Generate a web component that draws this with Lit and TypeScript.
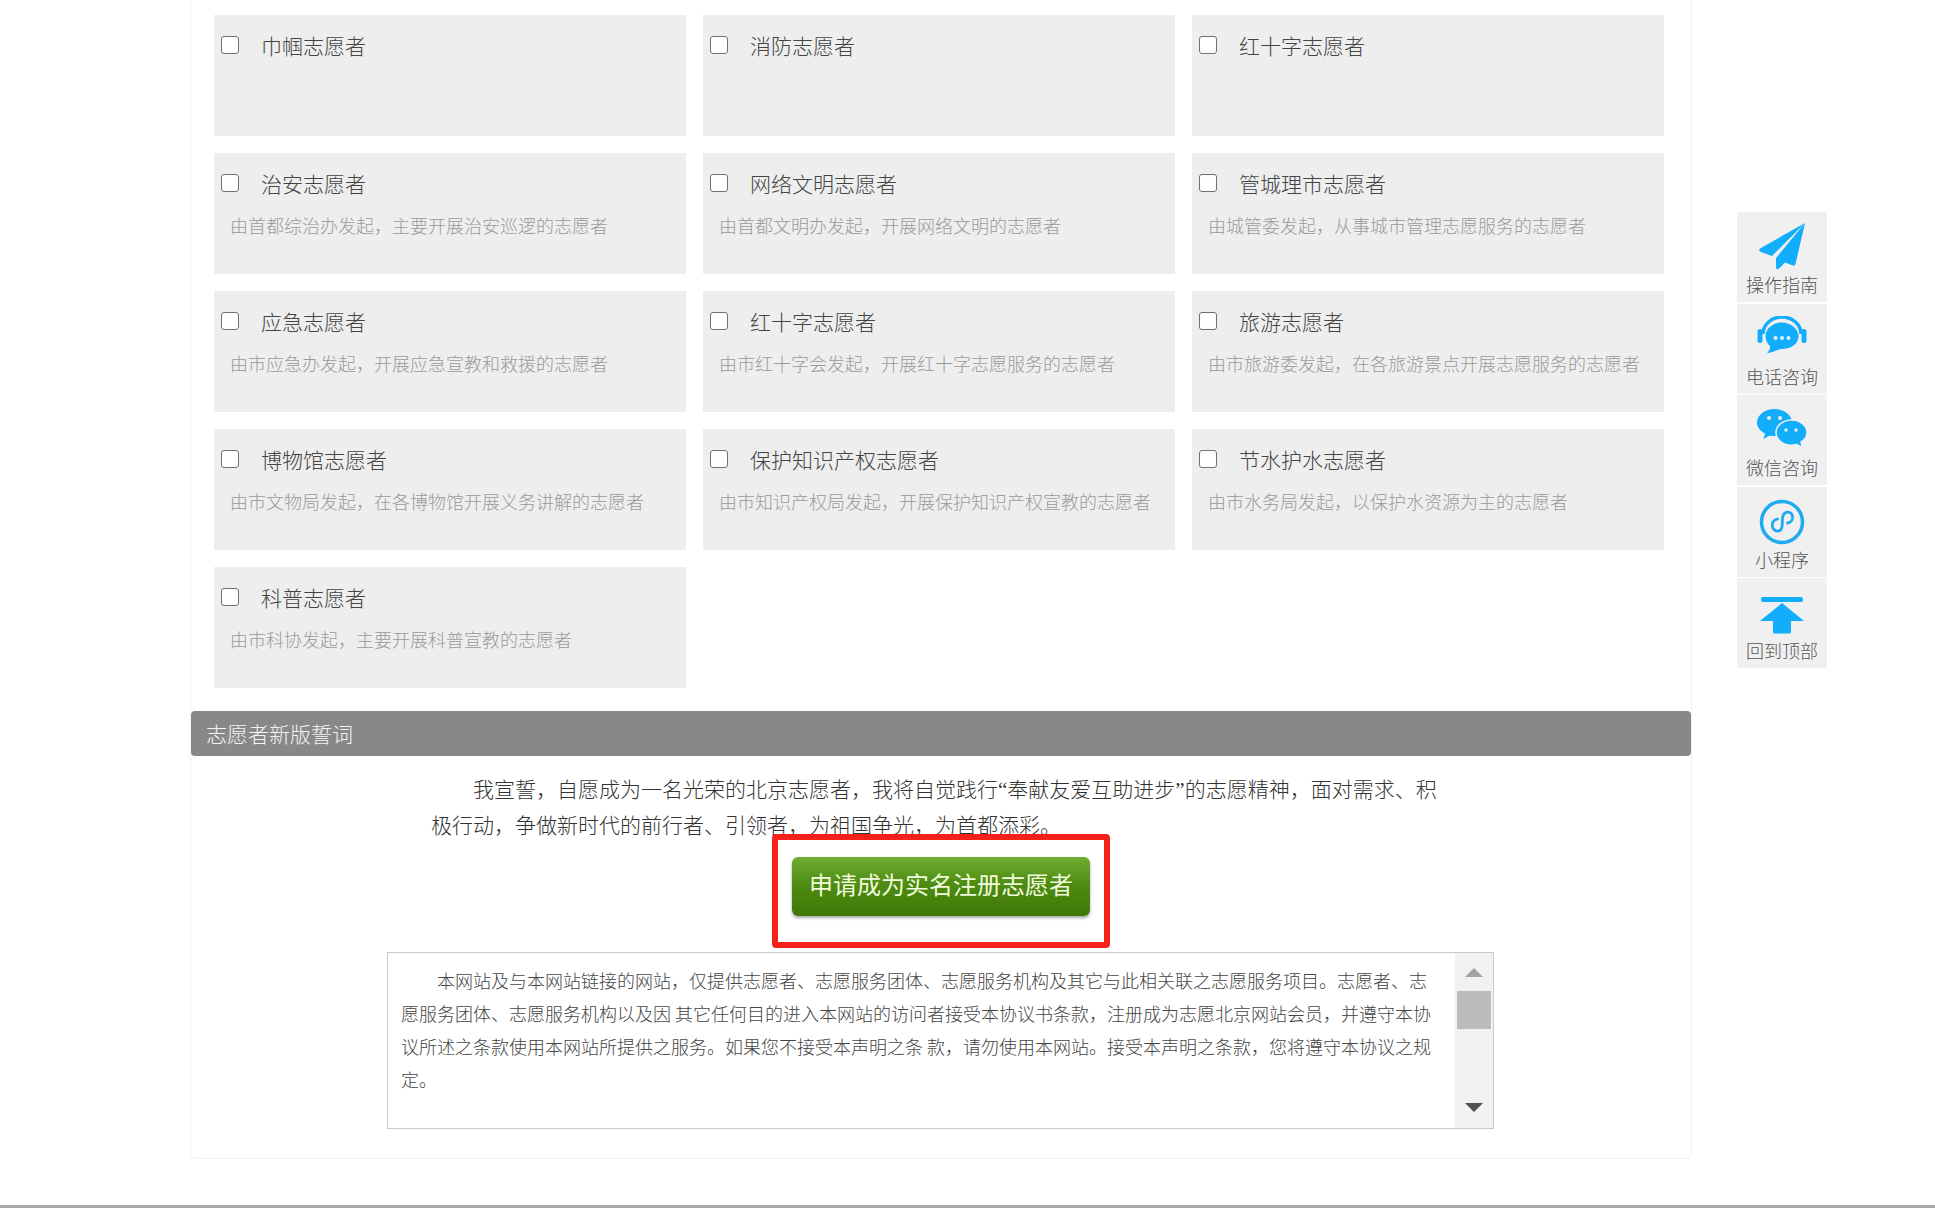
import { LitElement, html, css, svg } from "lit";
import { customElement } from "lit/decorators.js";

const cards: [string, string][] = [
  ["巾帼志愿者", ""],
  ["消防志愿者", ""],
  ["红十字志愿者", ""],
  ["治安志愿者", "由首都综治办发起，主要开展治安巡逻的志愿者"],
  ["网络文明志愿者", "由首都文明办发起，开展网络文明的志愿者"],
  ["管城理市志愿者", "由城管委发起，从事城市管理志愿服务的志愿者"],
  ["应急志愿者", "由市应急办发起，开展应急宣教和救援的志愿者"],
  ["红十字志愿者", "由市红十字会发起，开展红十字志愿服务的志愿者"],
  ["旅游志愿者", "由市旅游委发起，在各旅游景点开展志愿服务的志愿者"],
  ["博物馆志愿者", "由市文物局发起，在各博物馆开展义务讲解的志愿者"],
  ["保护知识产权志愿者", "由市知识产权局发起，开展保护知识产权宣教的志愿者"],
  ["节水护水志愿者", "由市水务局发起，以保护水资源为主的志愿者"],
  ["科普志愿者", "由市科协发起，主要开展科普宣教的志愿者"],
];

const BLUE = "#12adfb";
const icons = [
  {
    label: "操作指南", top: 11, icon: svg`<svg width="46" height="47" viewBox="0 0 46 47" fill="${BLUE}">
      <path d="M46 0 L1 25.5 Q-1 27.5 2 29 L13 33 Z"/>
      <path d="M46 0 L17 35 V44 Q17 47.5 20 45.5 L26 39.5 L34 42.5 Q36 43 36.5 41 Z"/></svg>`,
  },
  {
    label: "电话咨询", top: 12, icon: svg`<svg width="50" height="38" viewBox="0 0 50 38">
      <path d="M6 18 A19 17 0 0 1 44 18" fill="none" stroke="${BLUE}" stroke-width="3.5"/>
      <rect x="0.5" y="13" width="5" height="14" rx="2.5" fill="${BLUE}"/>
      <rect x="44.5" y="13" width="5" height="14" rx="2.5" fill="${BLUE}"/>
      <path d="M25 6.5 C34 6.5 41.5 13 41.5 20 C41.5 28 34 33 25 33 C21 33 18 36 10 37 C12 35 13.5 32.5 13 30 C10 27.5 8.5 24 8.5 20 C8.5 13 16 6.5 25 6.5 Z" fill="${BLUE}"/>
      <circle cx="18.5" cy="22" r="2" fill="#fff" opacity=".85"/><circle cx="25" cy="22" r="2" fill="#fff" opacity=".85"/><circle cx="31.5" cy="22" r="2" fill="#fff" opacity=".85"/></svg>`,
  },
  {
    label: "微信咨询", top: 13, icon: svg`<svg width="50" height="41" viewBox="0 0 50 41">
      <path d="M17.5 1 C27 1 35 7 35 14.5 C35 22 27 28 17.5 28 C15.5 28 14 27.8 12.5 27.4 L6.5 31 L8 25.5 C3 23 0 19 0 14.5 C0 7 8 1 17.5 1 Z" fill="${BLUE}"/>
      <path d="M34.5 12 C43 12 50 17.5 50 24.5 C50 28.5 47.5 32 44 34 L45.5 39.5 L39.5 36.5 C37.8 37 36.2 37.2 34.5 37.2 C26 37.2 19 31.5 19 24.5 C19 17.5 26 12 34.5 12 Z" fill="${BLUE}" stroke="#f0f0f0" stroke-width="1.5"/>
      <circle cx="12" cy="10" r="2" fill="#f0f0f0"/><circle cx="23" cy="10" r="2" fill="#f0f0f0"/>
      <circle cx="29" cy="22" r="1.7" fill="#f0f0f0"/><circle cx="39" cy="22" r="1.7" fill="#f0f0f0"/></svg>`,
  },
  {
    label: "小程序", top: 12, icon: svg`<svg width="46" height="46" viewBox="0 0 46 46" fill="none" stroke="#20aaf0">
      <circle cx="23" cy="23" r="20.5" stroke-width="3.5"/>
      <path d="M18.5 20 C14.5 21 12.5 24 13.5 28 C14.5 32 19.5 33.5 22 30.5 C23.5 28.5 23.3 25.5 23.3 22 C23.3 18 23.8 15.5 26 14 C29 12 33 13.5 33.5 17.5 C34 21 31.5 23.5 28.5 24" stroke-width="2.8" stroke-linecap="round"/></svg>`,
  },
  {
    label: "回到顶部", top: 19, icon: svg`<svg width="44" height="37" viewBox="0 0 44 37" fill="${BLUE}">
      <rect x="1" y="0" width="42" height="5" rx="2"/>
      <path d="M22 6 L44 24 H31 V35 Q31 36.5 29.5 36.5 H14.5 Q13 36.5 13 35 V24 H0 Z"/></svg>`,
  },
];

@customElement("app-root")
export class AppRoot extends LitElement {
  static styles = css`
    :host {
      display: block;
      position: relative;
      height: 1208px;
      overflow: hidden;
      background: #fff;
      font-family: "Noto Sans CJK SC", "Liberation Serif", sans-serif;
      font-weight: 300;
    }
    .page {
      height: 1208px;
      display: flex;
      flex-direction: column;
    }
    .panel {
      width: 1502px;
      height: 1159px;
      margin-left: 190px;
      box-sizing: border-box;
      border: 1px solid #f1f1f1;
      border-top: 0;
      border-radius: 0 0 6px 6px;
      position: relative;
    }
    .grid {
      display: grid;
      grid-template-columns: repeat(3, 472px);
      grid-auto-rows: 121px;
      gap: 17px;
      padding: 15px 0 0 23px;
    }
    .card {
      background: #eeeeee;
      padding-top: 20px;
      box-sizing: border-box;
    }
    .row {
      display: flex;
      align-items: center;
      height: 22px;
      padding-left: 7px;
    }
    .row input {
      appearance: none;
      width: 18px;
      height: 18px;
      margin: -2px 22px 0 0;
      flex: none;
      box-sizing: border-box;
      background: #fff;
      border: 1px solid #707070;
      border-radius: 3px;
    }
    .title {
      font-size: 21px;
      line-height: 22px;
      margin-top: -2px;
      color: #444;
    }
    .desc {
      margin-top: 18px;
      padding-left: 16px;
      font-size: 18px;
      line-height: 24px;
      color: #9a9a9a;
      white-space: nowrap;
    }
    .header {
      margin-top: 23px;
      height: 45px;
      box-sizing: border-box;
      padding: 0 0 2px 15px;
      background: #888;
      border-radius: 4px;
      display: flex;
      align-items: center;
      font-size: 21px;
      color: #f4f4f4;
    }
    .oath {
      width: 1004px;
      margin: 14px 0 0 240px;
      font-size: 21px;
      line-height: 36px;
      color: #333;
      white-space: nowrap;
    }
    .oath div:first-child {
      padding-left: 42px;
    }
    .q {
      font-family: "Liberation Serif", serif;
      font-weight: 400;
      line-height: 0;
    }
    .btn-wrap {
      display: flex;
      justify-content: center;
      margin-top: 15px;
      position: relative;
    }
    .btn {
      width: 298px;
      height: 59px;
      box-sizing: border-box;
      border: 0;
      border-radius: 6px;
      background: linear-gradient(#6fad33, #4f8c12 45%, #3d7805);
      box-shadow: 0 2px 3px rgba(0, 0, 0, 0.35);
      color: #f0fbdc;
      font: inherit;
      font-weight: 400;
      font-size: 24px;
      padding: 0 0 6px;
    }
    .mark {
      position: absolute;
      left: 581px;
      top: -23px;
      width: 338px;
      height: 114px;
      box-sizing: border-box;
      border: 6px solid #f5211a;
      border-radius: 4px;
    }
    .agree {
      display: flex;
      width: 1107px;
      height: 177px;
      box-sizing: border-box;
      margin: 36px 0 0 196px;
      border: 1px solid #c9c9c9;
    }
    .agree-text {
      flex: 1;
      box-sizing: border-box;
      padding: 11px 0 0 13px;
      font-size: 18px;
      line-height: 33px;
      color: #444;
      text-indent: 36px;
      min-width: 0;
    }
    .agree-text p {
      margin: 0;
      width: 1036px;
    }
    .scroll {
      width: 38px;
      flex: none;
      background: #f1f1f1;
      display: flex;
      flex-direction: column;
      align-items: center;
      box-sizing: border-box;
      padding-top: 15px;
    }
    .up {
      width: 0;
      height: 0;
      border-left: 9px solid transparent;
      border-right: 9px solid transparent;
      border-bottom: 9px solid #a3a3a3;
    }
    .thumb {
      width: 34px;
      height: 38px;
      margin-top: 14px;
      background: #bcbcbc;
    }
    .down {
      width: 0;
      height: 0;
      margin-top: 74px;
      border-left: 9px solid transparent;
      border-right: 9px solid transparent;
      border-top: 9px solid #505050;
    }
    .band {
      margin-top: auto;
      height: 3px;
      background: #a9a9a9;
    }
    .side {
      position: absolute;
      left: 1737px;
      top: 212px;
      width: 90px;
      display: flex;
      flex-direction: column;
      gap: 1.5px;
    }
    .side-item {
      height: 90px;
      box-sizing: border-box;
      background: #f0f0f0;
      display: flex;
      flex-direction: column;
      align-items: center;
      position: relative;
    }
    .side-item svg {
      display: block;
    }
    .side-label {
      position: absolute;
      left: 0;
      right: 0;
      top: 60px;
      text-align: center;
      font-size: 18px;
      line-height: 24px;
      color: #555;
    }
  `;

  render() {
    return html`
      <div class="page">
        <div class="panel">
          <div class="grid">
            ${cards.map(
              ([t, d]) => html`<div class="card">
                <div class="row"><input type="checkbox" /><span class="title">${t}</span></div>
                <div class="desc">${d}</div>
              </div>`
            )}
          </div>
          <div class="header">志愿者新版誓词</div>
          <div class="oath">
            <div>我宣誓，自愿成为一名光荣的北京志愿者，我将自觉践行<span class="q">“</span>奉献友爱互助进步<span class="q">”</span>的志愿精神，面对需求、积</div>
            <div>极行动，争做新时代的前行者、引领者，为祖国争光，为首都添彩。</div>
          </div>
          <div class="btn-wrap">
            <button class="btn">申请成为实名注册志愿者</button>
            <div class="mark"></div>
          </div>
          <div class="agree">
            <div class="agree-text">
              <p>本网站及与本网站链接的网站，仅提供志愿者、志愿服务团体、志愿服务机构及其它与此相关联之志愿服务项目。志愿者、志愿服务团体、志愿服务机构以及因 其它任何目的进入本网站的访问者接受本协议书条款，注册成为志愿北京网站会员，并遵守本协议所述之条款使用本网站所提供之服务。如果您不接受本声明之条 款，请勿使用本网站。接受本声明之条款，您将遵守本协议之规定。</p>
            </div>
            <div class="scroll">
              <div class="up"></div>
              <div class="thumb"></div>
              <div class="down"></div>
            </div>
          </div>
        </div>
        <div class="band"></div>
      </div>
      <div class="side">
        ${icons.map(
          (i) => html`<div class="side-item" style="padding-top:${i.top}px">
            ${i.icon}
            <div class="side-label">${i.label}</div>
          </div>`
        )}
      </div>
    `;
  }
}
